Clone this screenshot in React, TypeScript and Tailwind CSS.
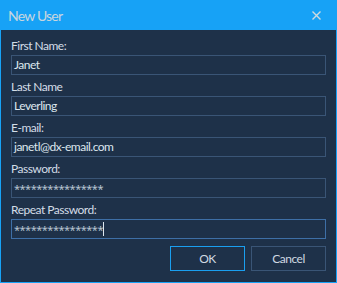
import React from "react";

const fields = [
  { label: "First Name:", value: "Janet" },
  { label: "Last Name", value: "Leverling" },
  { label: "E-mail:", value: "janetl@dx-email.com" },
  { label: "Password:", value: "****************", secret: true },
  { label: "Repeat Password:", value: "****************", secret: true, focused: true },
];

export default function App() {
  return (
    <div
      className="w-[337px] h-[283px] flex flex-col bg-[#1e3149] text-[12px] tracking-[-0.5px] text-[#d3dde7]"
      style={{ fontFamily: 'Lato, "Noto Sans", sans-serif' }}
    >
      <div className="h-[30px] shrink-0 bg-[#17a2f6] flex items-center justify-between pl-[8px] pr-[16px]">
        <span className="text-[14px] tracking-[-0.8px] text-[#c9d6de]">New User</span>
        <svg width="9" height="9" viewBox="0 0 9 9" className="text-[#d0dade]">
          <path d="M0.5 0.5 L8.5 8.5 M8.5 0.5 L0.5 8.5" stroke="currentColor" strokeWidth="1.4" />
        </svg>
      </div>
      <div className="flex-1 border-x border-b border-[#17a2f6] px-[10px] pt-[7px] flex flex-col gap-[3px]">
        {fields.map((f) => (
          <div key={f.label} className="flex flex-col">
            <label className="h-[18px] leading-[18px]">{f.label}</label>
            <div
              className={
                "h-[20px] border flex items-center pl-[2px] leading-none " +
                (f.focused ? "border-[#3e6fa6]" : "border-[#3a5576]")
              }
            >
              <span
                className={f.secret ? "text-[11px] tracking-[-0.5px] text-[#b7c4d2]" : "text-[#dde6ee]"}
                style={f.secret ? { fontFamily: '"Noto Sans", sans-serif' } : undefined}
              >
                {f.value}
              </span>
              {f.focused && <span className="w-px h-[14px] bg-[#dde6ee]" />}
            </div>
          </div>
        ))}
        <div className="flex justify-end gap-[6px] mt-[4px]">
          <button className="w-[75px] h-[25px] border border-[#1a9ff0] text-[#cfd9e2]">OK</button>
          <button className="w-[75px] h-[25px] border border-[#3a5576] text-[#cfd9e2]">Cancel</button>
        </div>
      </div>
    </div>
  );
}
